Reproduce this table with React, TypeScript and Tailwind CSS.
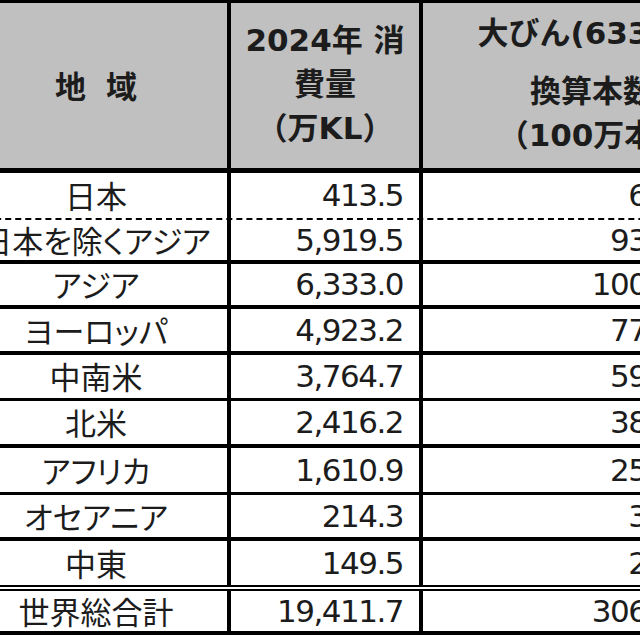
import React from "react";

type Row = {
  name: string;
  kl: string;
  bottles: string;
  rowClass: string;
};

const rows: Row[] = [
  { name: "日本", kl: "413.5", bottles: "6,532.4", rowClass: "h-[47px] border-b-2 border-dashed" },
  { name: "日本を除くアジア", kl: "5,919.5", bottles: "93,515.0", rowClass: "h-[44px] border-b-4" },
  { name: "アジア", kl: "6,333.0", bottles: "100,047.4", rowClass: "h-[45px] border-b-4" },
  { name: "ヨーロッパ", kl: "4,923.2", bottles: "77,775.7", rowClass: "h-[46px] border-b-4" },
  { name: "中南米", kl: "3,764.7", bottles: "59,473.9", rowClass: "h-[46px] border-b-[3px]" },
  { name: "北米", kl: "2,416.2", bottles: "38,170.6", rowClass: "h-[47px] border-b-4" },
  { name: "アフリカ", kl: "1,610.9", bottles: "25,448.7", rowClass: "h-[47px] border-b-[3px]" },
  { name: "オセアニア", kl: "214.3", bottles: "3,385.5", rowClass: "h-[46px] border-b-4" },
  { name: "中東", kl: "149.5", bottles: "2,361.8", rowClass: "h-[50px] border-b-[6px] border-double" },
  { name: "世界総合計", kl: "19,411.7", bottles: "306,661.9", rowClass: "h-[44px] border-b-4" },
];

export default function App() {
  return (
    <div className="w-[640px] h-[640px] overflow-hidden bg-white">
      <div className="-ml-[35px] w-[800px] text-[#1c1c1c] font-['DejaVu_Sans','Noto_Sans_CJK_JP',sans-serif]">
        {/* header */}
        <div className="flex h-[173px] border-t-[3px] border-b-[5px] border-black bg-[#c0c0c0] font-bold text-[31px]">
          <div className="w-[266px] shrink-0 border-r-4 border-black flex items-center justify-center gap-[20px] font-['Noto_Sans_CJK_JP',sans-serif]">
            <span>地</span>
            <span>域</span>
          </div>
          <div className="w-[192px] shrink-0 border-r-4 border-black flex flex-col items-center justify-center leading-[44px] pb-[4px]">
            <span>2024年 消</span>
            <span>費量</span>
            <span>（万KL）</span>
          </div>
          <div className="w-[338px] shrink-0 flex flex-col items-center justify-center leading-[44px] pb-[4px]">
            <span className="mb-[14px]">大びん(633ml)</span>
            <span>換算本数</span>
            <span>（100万本）</span>
          </div>
        </div>

        {rows.map((r) => (
          <div key={r.name} className={`flex border-black ${r.rowClass}`}>
            <div className="w-[266px] shrink-0 border-r-4 border-black flex items-center justify-center text-[31px] whitespace-nowrap font-['Noto_Sans_CJK_JP',sans-serif] [font-feature-settings:'palt']">
              {r.name}
            </div>
            <div className="w-[192px] shrink-0 border-r-4 border-black flex items-center justify-end pr-[16px] text-[31px] tracking-[-1.5px]">
              {r.kl}
            </div>
            <div className="w-[338px] shrink-0 flex items-center justify-end pr-[25px] text-[31px] tracking-[-1.5px]">
              {r.bottles}
            </div>
          </div>
        ))}
      </div>
    </div>
  );
}
